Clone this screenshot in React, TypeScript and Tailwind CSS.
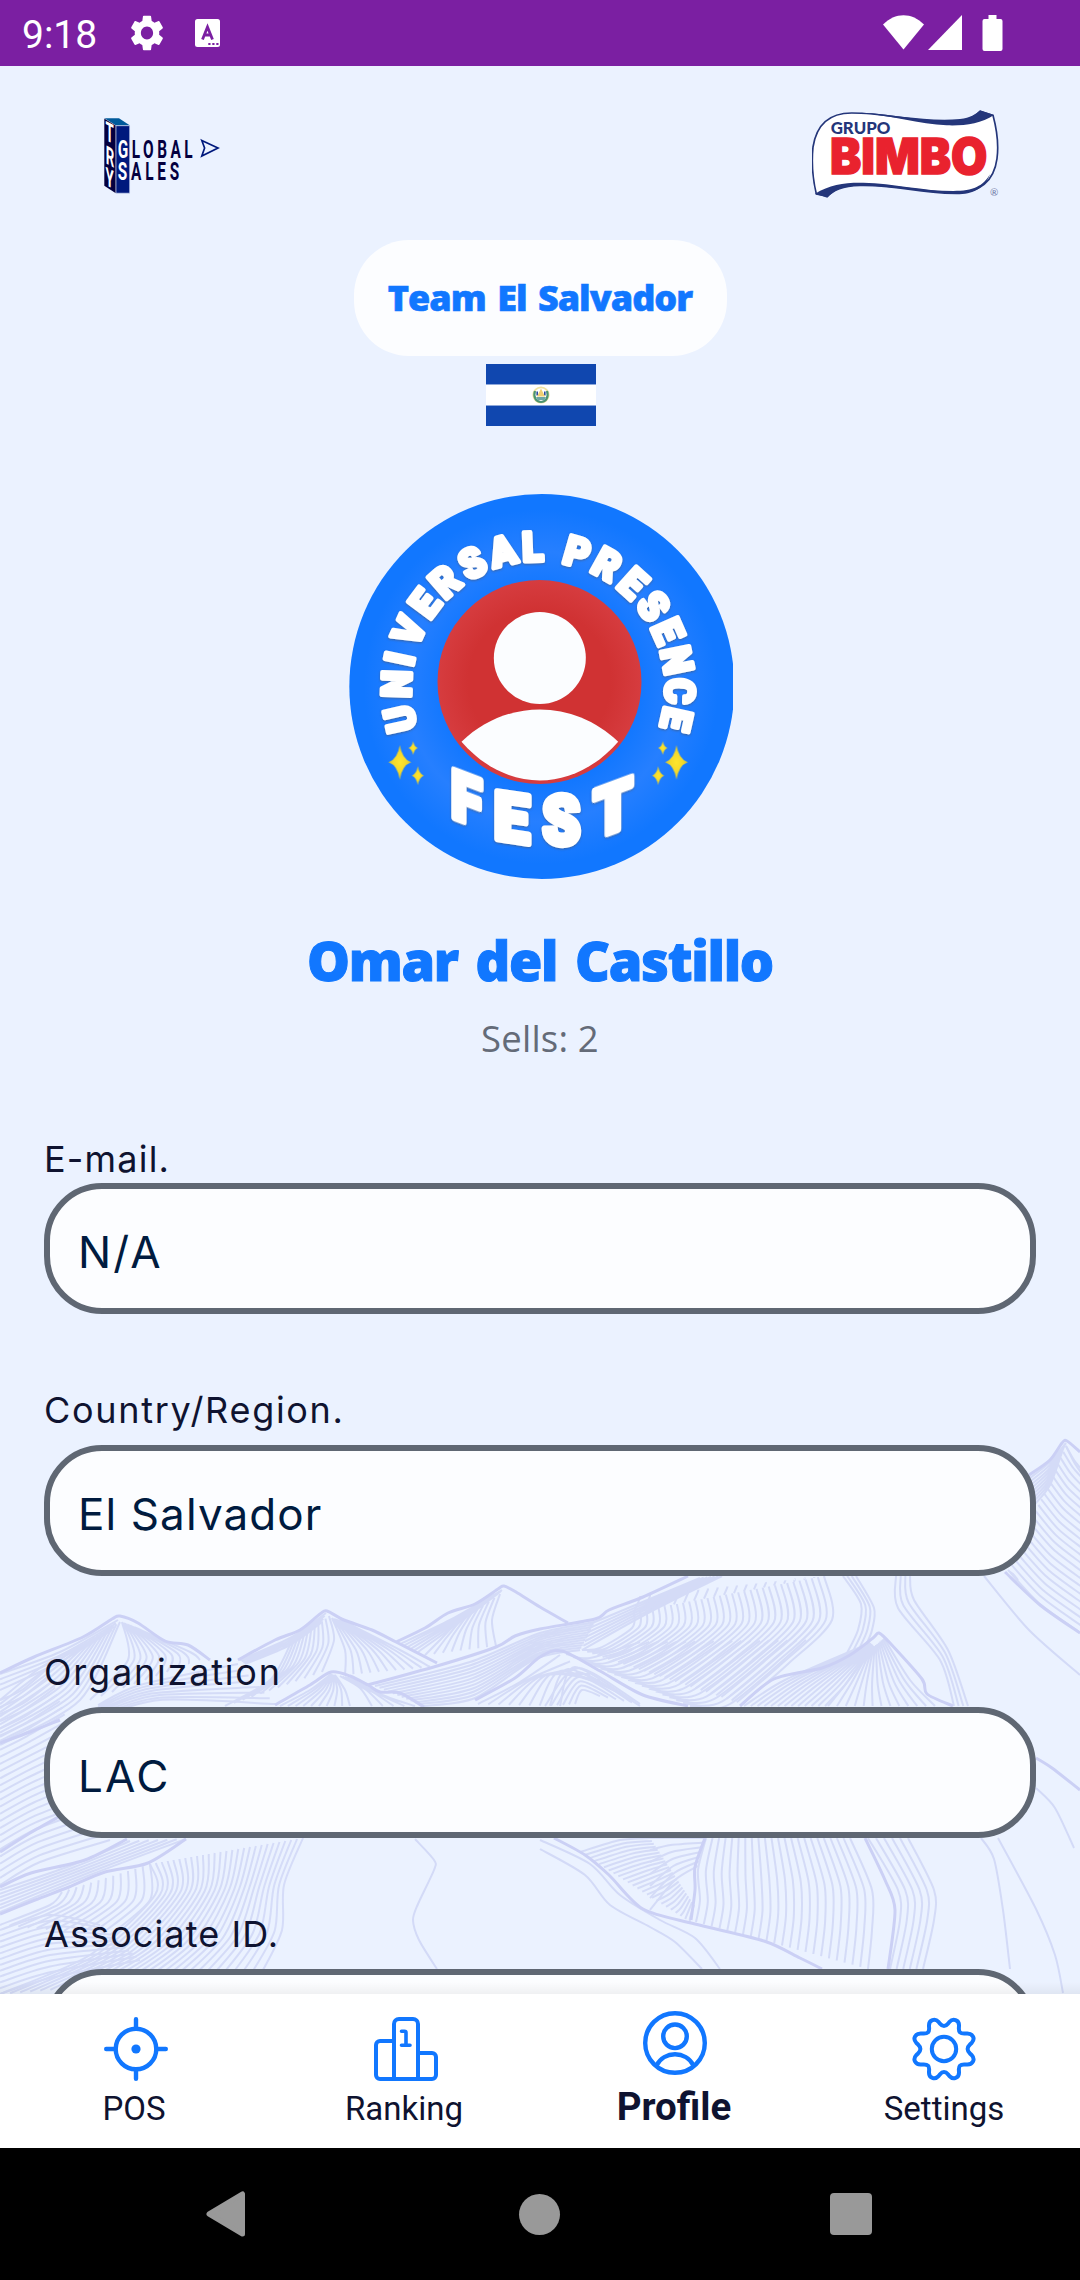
type Point = [number, number];

const fields = [
  { label: "E-mail.", value: "N/A", gap: "mt-[4px]", labelSpacing: "tracking-[1.2px]", valueSpacing: "tracking-[2.2px]" },
  { label: "Country/Region.", value: "El Salvador", gap: "mt-[15px]", labelSpacing: "tracking-[1.7px]", valueSpacing: "tracking-[1.100px]" },
  { label: "Organization", value: "LAC", gap: "mt-[15px]", labelSpacing: "tracking-[1.8px]", valueSpacing: "tracking-[2.2px]" },
  { label: "Associate ID.", value: "", gap: "mt-[15px]", labelSpacing: "tracking-[1.1px]", valueSpacing: "" },
];

// Smooth open curve through a list of points
function curve(pts: Point[]) {
  let d = `M${pts[0][0]} ${pts[0][1]}`;
  for (let i = 0; i < pts.length - 1; i++) {
    const p0 = pts[i - 1] ?? pts[i];
    const p1 = pts[i];
    const p2 = pts[i + 1];
    const p3 = pts[i + 2] ?? p2;
    const c1 = [p1[0] + (p2[0] - p0[0]) / 7, p1[1] + (p2[1] - p0[1]) / 7];
    const c2 = [p2[0] - (p3[0] - p1[0]) / 7, p2[1] - (p3[1] - p1[1]) / 7];
    d += `C${c1[0].toFixed(1)} ${c1[1].toFixed(1)} ${c2[0].toFixed(1)} ${c2[1].toFixed(1)} ${p2[0]} ${p2[1]}`;
  }
  return d;
}

const ridges: Point[][] = [
  [[0, 1673], [34, 1657], [83, 1637], [112, 1619], [120, 1616], [138, 1623], [165, 1641], [188, 1645], [210, 1660]],
  [[238, 1660], [275, 1640], [300, 1630], [320, 1614], [327, 1611], [344, 1620], [372, 1630], [396, 1642], [437, 1663]],
  [[396, 1642], [425, 1628], [448, 1613], [475, 1604], [498, 1589], [504, 1586], [516, 1592], [540, 1607], [568, 1623]],
  [[368, 1685], [437, 1666], [496, 1647], [515, 1636], [540, 1629], [595, 1619], [609, 1610], [643, 1597], [688, 1576]],
  [[275, 1705], [310, 1685], [331, 1672], [350, 1676], [368, 1685], [380, 1692], [400, 1693], [424, 1707]],
  [[475, 1700], [515, 1678], [540, 1657], [562, 1651], [600, 1671], [643, 1695], [688, 1706]],
  [[740, 1706], [774, 1679], [822, 1668], [850, 1655], [873, 1638], [879, 1633], [890, 1643], [922, 1679], [927, 1694], [953, 1706]],
  [[1029, 1475], [1050, 1460], [1062, 1443], [1067, 1441], [1080, 1452]],
  [[1005, 1572], [1040, 1605], [1080, 1633]],
  [[554, 1838], [585, 1855], [609, 1875], [643, 1909], [695, 1924], [764, 1941], [800, 1958], [822, 1969]],
  [[0, 1743], [30, 1732], [60, 1720]],
  [[0, 1852], [30, 1833], [62, 1815]],
  [[0, 1887], [31, 1873], [85, 1860], [127, 1839]],
  [[0, 1914], [35, 1900], [69, 1887], [105, 1872], [148, 1863], [186, 1839]],
  [[1036, 1758], [1052, 1768], [1080, 1790]],
  [[705, 1838], [695, 1867], [695, 1890], [691, 1920]],
  [[865, 1838], [885, 1880], [895, 1910], [888, 1969]],
];

const trails: Point[][] = [
  [[984, 1576], [1029, 1630], [1080, 1675]],
  [[415, 1839], [434, 1860], [434, 1870], [418, 1904], [413, 1920], [419, 1940], [437, 1969]],
  [[540, 1840], [590, 1864], [620, 1895], [660, 1920], [695, 1938], [720, 1969]],
  [[540, 1849], [585, 1875], [610, 1905], [650, 1927], [675, 1942], [702, 1969]],
  [[981, 1838], [994, 1859], [1003, 1910], [1010, 1969]],
  [[998, 1838], [1036, 1909], [1055, 1955], [1063, 1993]],
  [[1036, 1788], [1055, 1808], [1074, 1848]],
];

// Each hatch fills the area between two guide lines
const hatches: { from: Point[]; to: Point[]; count: number }[] = [
  { from: [[0, 1674], [60, 1652], [118, 1620]], to: [[0, 1690], [60, 1662], [112, 1630]], count: 4 },
  { from: [[0, 1700], [40, 1668], [80, 1646]], to: [[0, 1745], [80, 1700], [120, 1622]], count: 12 },
  { from: [[122, 1622], [128, 1660], [90, 1700]], to: [[136, 1628], [190, 1652], [200, 1660]], count: 11 },
  { from: [[98, 1705], [140, 1685], [238, 1664]], to: [[98, 1718], [160, 1700], [275, 1704]], count: 8 },
  { from: [[240, 1660], [290, 1638], [326, 1613]], to: [[245, 1664], [290, 1645], [322, 1622]], count: 4 },
  { from: [[290, 1645], [270, 1680], [225, 1706]], to: [[329, 1616], [334, 1640], [322, 1672]], count: 12 },
  { from: [[332, 1618], [345, 1650], [345, 1675]], to: [[345, 1622], [400, 1650], [430, 1667]], count: 11 },
  { from: [[400, 1644], [450, 1620], [502, 1590]], to: [[418, 1652], [460, 1622], [500, 1592]], count: 6 },
  { from: [[455, 1624], [440, 1640], [425, 1655]], to: [[500, 1594], [492, 1620], [496, 1646]], count: 9 },
  { from: [[331, 1674], [310, 1690], [280, 1706]], to: [[335, 1675], [345, 1690], [350, 1706]], count: 10 },
  { from: [[340, 1676], [360, 1688], [372, 1706]], to: [[350, 1678], [385, 1696], [415, 1706]], count: 5 },
  { from: [[375, 1686], [470, 1662], [540, 1633], [595, 1622]], to: [[424, 1706], [475, 1698], [535, 1659], [580, 1650]], count: 12 },
  { from: [[590, 1624], [645, 1601], [700, 1578]], to: [[582, 1650], [650, 1612], [722, 1576]], count: 7 },
  { from: [[582, 1650], [600, 1648], [632, 1628], [634, 1612]], to: [[742, 1704], [788, 1664], [832, 1620], [824, 1576]], count: 32 },
  { from: [[634, 1612], [640, 1598], [640, 1596]], to: [[824, 1576], [824, 1576], [824, 1576]], count: 20 },
  { from: [[566, 1654], [590, 1658], [640, 1642]], to: [[690, 1706], [730, 1704], [806, 1640]], count: 19 },
  { from: [[478, 1704], [520, 1682], [560, 1655]], to: [[560, 1706], [575, 1667], [640, 1706]], count: 9 },
  { from: [[575, 1704], [582, 1690], [600, 1696]], to: [[545, 1706], [578, 1668], [640, 1704]], count: 6 },
  { from: [[744, 1706], [785, 1680], [870, 1643]], to: [[825, 1706], [845, 1685], [874, 1646]], count: 13 },
  { from: [[868, 1652], [845, 1685], [828, 1706]], to: [[884, 1638], [910, 1680], [935, 1706]], count: 13 },
  { from: [[843, 1576], [861, 1604], [858, 1630], [846, 1655]], to: [[856, 1576], [874, 1608], [872, 1630], [866, 1645]], count: 4 },
  { from: [[896, 1576], [898, 1608], [940, 1660], [954, 1706]], to: [[910, 1576], [914, 1600], [948, 1650], [968, 1706]], count: 4 },
  { from: [[1030, 1478], [1050, 1462], [1066, 1443]], to: [[1034, 1505], [1050, 1485], [1064, 1446]], count: 9 },
  { from: [[1010, 1572], [1013, 1574], [1018, 1580]], to: [[1066, 1446], [1074, 1462], [1082, 1474]], count: 2 },
  { from: [[1066, 1446], [1074, 1460], [1082, 1470]], to: [[1008, 1570], [1040, 1604], [1082, 1634]], count: 22 },
  { from: [[0, 1700], [22, 1690], [48, 1668]], to: [[0, 1885], [40, 1862], [110, 1840]], count: 27 },
  { from: [[0, 1890], [70, 1866], [130, 1841]], to: [[0, 1912], [90, 1875], [186, 1839]], count: 7 },
  { from: [[62, 1892], [50, 1905], [0, 1925]], to: [[150, 1864], [150, 1900], [110, 1935]], count: 13 },
  { from: [[150, 1864], [155, 1895], [90, 1955], [0, 1994]], to: [[303, 1838], [284, 1885], [282, 1930], [262, 1972]], count: 27 },
  { from: [[0, 1930], [50, 1915], [100, 1925]], to: [[0, 1994], [50, 1978], [140, 1960]], count: 12 },
  { from: [[580, 1852], [620, 1840], [650, 1838]], to: [[690, 1922], [690, 1918], [694, 1905]], count: 24 },
  { from: [[650, 1838], [670, 1838], [704, 1838]], to: [[650, 1910], [675, 1880], [698, 1866]], count: 7 },
  { from: [[706, 1838], [698, 1870], [700, 1900], [696, 1922]], to: [[850, 1838], [872, 1890], [872, 1930], [868, 1969]], count: 23 },
  { from: [[868, 1838], [898, 1890], [900, 1920], [890, 1969]], to: [[908, 1838], [934, 1890], [934, 1920], [923, 1969]], count: 6 },
];

function hatchLines({ from, to, count }: { from: Point[]; to: Point[]; count: number }) {
  return Array.from({ length: count }, (_, i) => {
    const t = i / (count - 1);
    return curve(
      from.map(([x, y], k): Point => [
        +(x + (to[k][0] - x) * t).toFixed(1),
        +(y + (to[k][1] - y) * t).toFixed(1),
      ])
    );
  }).join("");
}

function Mountains() {
  return (
    <svg
      className="absolute inset-x-0 bottom-0"
      width="1080"
      height="594"
      viewBox="0 1400 1080 594"
      fill="none"
      aria-hidden="true"
    >
      <g stroke="#cfd6f6" strokeWidth="2" opacity="0.8">
        {hatches.map((h, i) => (
          <path key={i} d={hatchLines(h)} />
        ))}
      </g>
      <g stroke="#d3daf7" strokeWidth="2">
        {trails.map((t, i) => (
          <path key={i} d={curve(t)} />
        ))}
      </g>
      <g stroke="#cbd0f5" strokeWidth="3">
        {ridges.map((r, i) => (
          <path key={i} d={curve(r)} />
        ))}
      </g>
    </svg>
  );
}

function StatusBar() {
  return (
    <div className="flex h-[66px] shrink-0 items-center justify-between bg-[#7b1fa2] pl-[22px] pr-[77px] text-white">
      <div className="flex items-center">
        <span className="w-[108px] pt-[3px] font-[Roboto] text-[39px] leading-[40px]">9:18</span>
        <svg width="34" height="36" viewBox="2 2 20 20" preserveAspectRatio="none" fill="currentColor">
          <path d="M19.14 12.94c.04-.3.06-.61.06-.94 0-.32-.02-.64-.07-.94l2.03-1.58a.49.49 0 0 0 .12-.61l-1.92-3.32a.488.488 0 0 0-.59-.22l-2.39.96c-.5-.38-1.03-.7-1.62-.94l-.36-2.54a.484.484 0 0 0-.48-.41h-3.84c-.24 0-.43.17-.47.41l-.36 2.54c-.59.24-1.13.57-1.62.94l-2.39-.96c-.22-.08-.47 0-.59.22L2.74 8.87c-.12.21-.08.47.12.61l2.03 1.58c-.05.3-.09.63-.09.94s.02.64.07.94l-2.03 1.58a.49.49 0 0 0-.12.61l1.92 3.32c.12.22.37.29.59.22l2.39-.96c.5.38 1.03.7 1.62.94l.36 2.54c.05.24.24.41.48.41h3.84c.24 0 .44-.17.47-.41l.36-2.54c.59-.24 1.13-.56 1.62-.94l2.39.96c.22.08.47 0 .59-.22l1.92-3.32c.12-.22.07-.47-.12-.61l-2.01-1.58zM12 15.6c-1.98 0-3.6-1.62-3.6-3.6s1.62-3.6 3.6-3.6 3.6 1.62 3.6 3.6-1.62 3.6-3.6 3.6z" />
        </svg>
        <svg className="ml-[31px]" width="25" height="28" viewBox="0 0 25 28">
          <rect width="25" height="28" rx="2.5" fill="#fff" />
          <path d="M7.5 20.5l5-12.5 5 12.5M9.3 16h6.5" fill="none" stroke="#7b1fa2" strokeWidth="2.8" />
          <path d="M13.3 25h2.2M17.3 25h2.2M21.3 25h2.2" stroke="#7b1fa2" strokeWidth="2.2" />
        </svg>
      </div>
      <svg width="120" height="36" viewBox="0 0 120 36" fill="#fff">
        <path d="M0 9.5C12-3 29-3 41 9.500L20.5 34.500z" />
        <path d="M79 0v35H45z" />
        <path d="M105.5 0h8v4h4a2 2 0 0 1 2 2v28a2 2 0 0 1-2 2h-16a2 2 0 0 1-2-2V6a2 2 0 0 1 2-2h4z" />
      </svg>
    </div>
  );
}

function GlobalSalesLogo() {
  return (
    <svg width="118" height="77" viewBox="103 117 118 77" className="mt-[7px]">
      <path d="M104.5 118.3h14.500l11 7.200h-14z" fill="#005a9b" />
      <path d="M104.3 118.5l11.500 7.200v67.500l-11.500-7.500z" fill="#04003f" />
      <path d="M116 125.7h13.7v67.5H116z" fill="#00197d" stroke="#dfe8fb" strokeWidth="0.6" />
      <g fontFamily="Roboto, sans-serif" fontWeight="700">
        <g fill="#fff" textAnchor="middle" fontSize="25.5">
          <text transform="matrix(.52 .28 0 1.05 109.700 142)">T</text>
          <text transform="matrix(.52 .28 0 1 110 165.500)">R</text>
          <text transform="matrix(.52 .28 0 1 109.700 187)">Y</text>
        </g>
        {/* Initials sit on the column, the rest of each word runs off it */}
        <g fill="#04003f" fontSize="26.5">
          <text transform="translate(117.8 157.800) scale(.58 1)" textLength="129">
            <tspan fill="#fff">G</tspan>LOBAL
          </text>
          <text transform="translate(117.800 180) scale(.58 1)" textLength="106">
            <tspan fill="#fff">S</tspan>ALES
          </text>
        </g>
      </g>
      <path d="M201.8 140.5l16.2 7.500-16.2 8 2.800-8z" fill="none" stroke="#00197d" strokeWidth="1.7" />
    </svg>
  );
}

function BimboLogo() {
  return (
    <svg width="187" height="88" viewBox="96 329 561 264">
      <path
        d="M99 440C110 370 150 338 215 338c115 0 220 34 325 24 30-3 48-16 61-29l38 12c16 60 16 100 12 130-10 75-60 102-125 102-96 0-196-28-296-23-50 2-70 15-87 33l-34-6c-12-50-14-101-10-141z"
        fill="#fff"
        stroke="#24367a"
        strokeWidth="5"
      />
      <path d="M240 337c100 4 200 28 300 19 32-3 46-14 60-26l42 14c-40 26-90 33-142 31-80-4-170-30-260-38z" fill="#24367a" />
      <path d="M105 580c45-28 90-34 145-33 90 2 180 25 270 25 60 0 90-15 110-50-15 43-52 60-100 60-100 0-190-26-290-24-52 1-78 13-98 34z" fill="#24367a" />
      <text x="152" y="402" fontFamily="Lato, sans-serif" fontWeight="900" fontSize="49" fill="#24367a" textLength="179" lengthAdjust="spacingAndGlyphs">
        GRUPO
      </text>
      <text x="150" y="520" fontFamily="Inter, sans-serif" fontWeight="900" fontSize="147" fill="#e9222e" stroke="#e9222e" strokeWidth="4" textLength="472" lengthAdjust="spacingAndGlyphs">
        BIMBO
      </text>
      <text x="630" y="587" fontFamily="Lato, sans-serif" fontSize="30" fill="#6b78a5">
        ®
      </text>
    </svg>
  );
}

function Flag() {
  return (
    <svg width="110" height="62" viewBox="0 0 110 62" className="ml-[2px] mt-[8px]">
      <path d="M0 0h110v62H0z" fill="#1047af" />
      <path d="M0 20h110v22H0z" fill="#8ea8da" />
      <path d="M0 21h110v20H0z" fill="#fff" />
      <circle cx="55" cy="31" r="7.7" fill="none" stroke="#f0e3a0" strokeWidth="1.8" />
      <path d="M49 27c-2 6 1 11 6 11s8-5 6-11" fill="none" stroke="#4c9472" strokeWidth="2.2" />
      <path d="M51.2 27.5v4M58.8 27.5v4" stroke="#2b4aa0" strokeWidth="1.6" />
      <path d="M55 24.500l4 8h-8z" fill="#f2cf72" />
      <path d="M50 33h10l-1.500 3h-7z" fill="#6fa6a4" />
    </svg>
  );
}

const arcLetters: [string, number][] = [
  ["U", -102.5], ["N", -88.2], ["I", -78], ["V", -66], ["E", -53.2], ["R", -41], ["S", -27.7], ["A", -14.5], ["L", -2.2],
  ["P", 16], ["R", 29], ["E", 42], ["S", 54.4], ["E", 66.2], ["N", 78.5], ["C", 91.2], ["E", 102.6],
];

const stars = [
  [180, 847, 34, 52],
  [220, 804, 14, 21],
  [234, 887, 18, 29],
  [1010, 847, 34, 52],
  [969, 804, 14, 21],
  [955, 887, 18, 29],
];

function Badge() {
  return (
    <svg width="384" height="385" viewBox="28 42 1151 1155" className="ml-[2px] mt-[68px]">
      <defs>
        <radialGradient id="blue" cx="604" cy="620" r="578" gradientUnits="userSpaceOnUse">
          <stop offset="0.5" stopColor="#1177ff" />
          <stop offset="0.7" stopColor="#267fff" />
          <stop offset="0.92" stopColor="#1177ff" />
        </radialGradient>
        <radialGradient id="red">
          <stop offset="0.7" stopColor="#d03233" />
          <stop offset="1" stopColor="#d63c3f" />
        </radialGradient>
        <radialGradient id="gold">
          <stop offset="0" stopColor="#ffe52e" />
          <stop offset="0.6" stopColor="#f3d82b" />
          <stop offset="1" stopColor="#b9b954" />
        </radialGradient>
        <filter id="soft" x="-10%" y="-10%" width="120%" height="120%">
          <feDropShadow dx="0" dy="3" stdDeviation="3" floodColor="#4a5a78" floodOpacity="0.7" />
        </filter>
      </defs>
      <circle cx="606" cy="619.5" r="577.5" fill="url(#blue)" />
      <circle cx="599" cy="606" r="306" fill="url(#red)" />
      <circle cx="600" cy="534" r="138" fill="#fbfdff" />
      <path d="M365 785C500 656 700 656 835 785C700 940 500 940 365 785z" fill="#fbfdff" />
      <g
        fill="#fff"
        stroke="#fff"
        strokeWidth="13"
        strokeLinejoin="round"
        textAnchor="middle"
        fontFamily="Roboto, sans-serif"
        fontWeight="900"
        filter="url(#soft)"
      >
        {arcLetters.map(([ch, angle], i) => (
          <text key={i} fontSize="122" transform={`rotate(${angle} 595 625) translate(595 243) scale(.95 1)`}>
            {ch}
          </text>
        ))}
        <g fontSize="200" strokeWidth="20">
          <text transform="matrix(.84 .32 0 1 380 1028)">F</text>
          <text transform="matrix(.95 .14 0 1 516 1083)">E</text>
          <text transform="matrix(.9 -.02 .02 1.020 666 1092)">S</text>
          <text transform="matrix(.92 -.34 0 1 820 1056)">T</text>
        </g>
      </g>
      {stars.map(([x, y, rx, ry]) => (
        <path
          key={`${x}-${y}`}
          d={`M${x} ${y - ry}Q${x + rx * 0.2} ${y - ry * 0.18} ${x + rx} ${y}Q${x + rx * 0.2} ${y + ry * 0.18} ${x} ${y + ry}Q${x - rx * 0.2} ${y + ry * 0.18} ${x - rx} ${y}Q${x - rx * 0.2} ${y - ry * 0.18} ${x} ${y - ry}z`}
          fill="url(#gold)"
        />
      ))}
    </svg>
  );
}

function PosIcon() {
  return (
    <svg width="64" height="64" viewBox="0 0 64 64" fill="none" stroke="#1177ff" strokeWidth="4.4" strokeLinecap="round" className="ml-[2px]">
      <ellipse cx="32" cy="32" rx="20.300" ry="20.300" />
      <circle cx="32" cy="32" r="4.6" fill="#1177ff" stroke="none" />
      <path d="M32 2.2v9M32 53v8.800M2.200 32h9M53 32h8.800" />
    </svg>
  );
}

function RankingIcon() {
  return (
    <svg width="64" height="64" viewBox="0 0 64 64" fill="none" stroke="#1177ff" strokeWidth="4" strokeLinecap="round" strokeLinejoin="round" className="ml-[1px]">
      <path d="M20 24H6a4 4 0 0 0-4 4v30a4 4 0 0 0 4 4h52a4 4 0 0 0 4-4V40a4 4 0 0 0-4-4H44" />
      <path d="M20 62V7a5 5 0 0 1 5-5h14a5 5 0 0 1 5 5v55" />
      <path d="M27.5 14.2h3a1.5 1.5 0 0 1 1.5 1.5v12.5M27.5 28.3h8.500" strokeWidth="3.6" />
    </svg>
  );
}

function ProfileIcon() {
  return (
    <svg width="64" height="64" viewBox="0 0 64 64" fill="none" stroke="#1177ff" strokeWidth="4.4" className="mr-[1px]">
      <circle cx="32" cy="32" r="29.8" />
      <circle cx="32" cy="25.3" r="11.8" />
      <path d="M13.5 54.5C21 39.5 43 39.5 50.5 54.5" />
    </svg>
  );
}

function SettingsIcon() {
  return (
    <svg width="64" height="64" viewBox="0 0 64 64" fill="none" stroke="#1177ff" strokeWidth="4" strokeLinejoin="round" className="mr-[2px]">
      <circle cx="32" cy="32" r="12.2" />
      <path d="M26.5 4.8C29 7.500 29 8.900 32 8.900s3-1.400 5.500-4.100c3.600-4 9.500-1.800 9.500 3.400 0 4-.8 5.400 1 7.200s3.400 1.100 7.400 1.100c5.400 0 8.200 5.200 4.300 9.300-2.500 2.600-4.100 3.300-4.100 6.200s1.600 3.600 4.100 6.200c3.900 4.100 1.100 9.300-4.300 9.300-4 0-5.600-.7-7.400 1.100s-1 3.200-1 7.200c0 5.200-5.900 7.400-9.500 3.400-2.500-2.700-2.500-4.100-5.500-4.100s-3 1.400-5.500 4.100c-3.600 4-9.500 1.800-9.500-3.400 0-4 .8-5.400-1-7.200s-3.400-1.100-7.400-1.100c-5.400 0-8.200-5.200-4.300-9.300 2.500-2.600 4.100-3.300 4.100-6.200s-1.600-3.600-4.100-6.200c-3.900-4.100-1.100-9.300 4.300-9.300 4 0 5.600.7 7.400-1.100s1-3.200 1-7.200c0-5.200 5.900-7.400 9.500-3.400z" />
    </svg>
  );
}

const tabs = [
  { name: "POS", icon: PosIcon, active: false },
  { name: "Ranking", icon: RankingIcon, active: false },
  { name: "Profile", icon: ProfileIcon, active: true },
  { name: "Settings", icon: SettingsIcon, active: false },
];

export default function App() {
  return (
    <div className="flex h-[2280px] w-[1080px] flex-col overflow-hidden bg-[#ebf2ff]">
      <StatusBar />

      <main className="relative flex h-[1928px] shrink-0 flex-col overflow-hidden">
        <Mountains />

        <div className="relative flex shrink-0 flex-col items-center">
          {/* Brand logos */}
          <header className="flex w-full items-start justify-between pl-[103px] pr-[81px] pt-[44px]">
            <GlobalSalesLogo />
            <BimboLogo />
          </header>

          <div className="mt-[42px] flex h-[116px] w-[373px] items-center justify-center rounded-[55px] bg-[#fcfdff]">
            <span className="whitespace-nowrap font-['Open_Sans'] text-[36px] font-extrabold leading-[40px] tracking-[-1px] text-[#1177ff] [-webkit-text-stroke:0.6px_#1177ff] [word-spacing:3px]">
              Team El Salvador
            </span>
          </div>
          <Flag />
          <Badge />

          <h1 className="mt-[51px] whitespace-nowrap font-['Open_Sans'] text-[54px] font-extrabold leading-[60px] tracking-[-1.3px] text-[#1177ff] [-webkit-text-stroke:1px_#1177ff] [word-spacing:5px]">
            Omar del Castillo
          </h1>
          <p className="mt-[29px] font-['Open_Sans'] text-[36.5px] leading-[39px] text-[#646b78] tracking-[0.2px]">Sells: 2</p>
        </div>

        {/* Read-only account fields */}
        <div className="relative mt-[81px] flex shrink-0 flex-col gap-[76px] px-[44px] font-[Inter]">
          {fields.map((field) => (
            <div key={field.label}>
              <p className={`h-[40px] text-[36px] leading-[40px] text-[#0f1330] ${field.labelSpacing}`}>{field.label}</p>
              <div className={`flex h-[131px] items-center rounded-[58px] border-[6px] border-[#5f6773] bg-[#fcfdff] pl-[28px] pt-[6px] text-[44px] leading-[50px] text-[#001b3f] ${field.gap} ${field.valueSpacing}`}>
                {field.value}
              </div>
            </div>
          ))}
        </div>
        <div className="absolute inset-x-0 bottom-0 h-[12px] bg-linear-to-t from-black/5 to-transparent" />
      </main>

      <nav className="flex h-[154px] shrink-0 justify-between bg-white">
        {tabs.map(({ name, icon: Icon, active }) => (
          <div key={name} className={`flex w-[270px] flex-col items-center ${active ? "pt-[17px]" : "pt-[23px]"}`}>
            <Icon />
            <span
              className={
                active
                  ? "mt-[12px] mr-[2px] font-[Roboto] text-[38.5px] font-bold leading-[40px] text-[#0f1330]"
                  : "mt-[8px] mr-[2px] font-[Roboto] text-[33px] leading-[40px] text-[#0f1330]"
              }
            >
              {name}
            </span>
          </div>
        ))}
      </nav>

      {/* Android system buttons */}
      <div className="flex h-[132px] shrink-0 items-center justify-between bg-black pl-[206px] pr-[208px]">
        <svg width="40" height="46" viewBox="0 0 40 46" fill="#999" stroke="#999" strokeWidth="5" strokeLinejoin="round">
          <path d="M3 23L36.500 3v40z" />
        </svg>
        <div className="ml-[2px] size-[41px] rounded-full bg-[#999]" />
        <div className="h-[42px] w-[42px] rounded-[4px] bg-[#999]" />
      </div>
    </div>
  );
}
